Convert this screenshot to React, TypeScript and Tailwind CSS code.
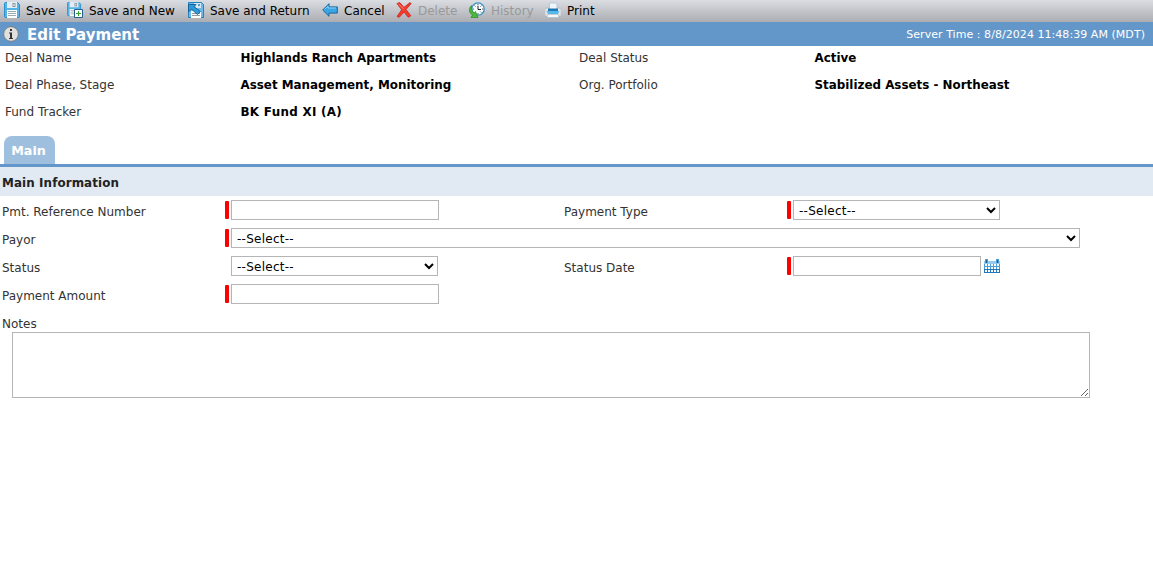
import type { ReactNode } from 'react';

interface ToolbarItem {
  label: string;
  icon: ReactNode;
  className: string;
  disabled?: boolean;
}

interface FieldProps {
  label: string;
  required?: boolean;
  className?: string;
  children: ReactNode;
}

const Disk = () => (
  <>
    <path d="M.5 1.500q0-1 1-1h12l2 2v12q0 1-1 1h-13q-1 0-1-1z" fill="#55b3e8" stroke="#2d8fca" />
    <path d="M3 0h10v6H3z" fill="#e3edf5" />
    <path d="M8.500 1h3v4h-3z" fill="#8b959e" />
    <path d="M9.500 2h1v2h-1z" fill="#fff" />
    <path d="M3 8h10v8H3z" fill="#fff" />
    <path d="M4 9.500h8M4 11.500h8M4 13.500h8" stroke="#a0a9b0" />
  </>
);

const SaveIcon = () => (
  <svg className="size-4" viewBox="0 0 16 16"><Disk /></svg>
);

const SaveNewIcon = () => (
  <svg className="size-4" viewBox="0 0 16 16">
    <g transform="scale(.88)"><Disk /></g>
    <path d="M7.500 7.500h8v8h-8z" fill="#fff" stroke="#1f5f92" />
    <path d="M11.500 9v5M9 11.500h5" stroke="#38a326" />
  </svg>
);

const SaveReturnIcon = () => (
  <svg className="size-4" viewBox="0 0 16 16">
    <path d="M.5.500h13l2 2v13H.5z" fill="#6abbe9" stroke="#2482bd" />
    <path d="M6 1h7v5H8z" fill="#d5e8f5" />
    <path d="M10 2h2v2h-2z" fill="#5c9ac4" />
    <path d="M3 9h10v7H3z" fill="#fff" />
    <path d="M4 11.500h8M4 13.500h8" stroke="#929ca4" />
    <path d="M.5 2.500h7.500L6 4.800l6.500 4.700-3 3L3.500 7.200.5 9.800z" fill="#2d9ad9" stroke="#175c8d" strokeWidth=".9" />
  </svg>
);

const CancelIcon = () => (
  <svg className="size-4" viewBox="0 0 16 16">
    <path d="M.7 8 7 1.700v3.200h8.300v6.200H7v3.200z" fill="#39a5e4" stroke="#176699" strokeLinejoin="round" />
    <path d="M2.500 7.500 6 4v2h8" fill="none" stroke="#87d0f6" />
  </svg>
);

const DeleteIcon = () => (
  <svg className="size-4" viewBox="0 0 16 16">
    <path d="M1 1.500 3.800.6 8 5.400 13.800.7l1.400.8L10 7.500l4.800 6.300-2.500 1.500L8 10l-4.800 5.300-2.100-.8L5.700 7.800z" fill="#f43b2c" stroke="#c91f17" strokeWidth=".8" strokeLinejoin="round" />
    <path d="m2.500 1.800 5 5" stroke="#ff8b7a" />
  </svg>
);

const HistoryIcon = () => (
  <svg className="size-4" viewBox="0 0 16 16">
    <circle cx="9" cy="7" r="6.200" fill="#f7fbfd" stroke="#378fc0" strokeWidth="1.300" />
    <path d="M9 2v1.500M9 11v1.500M4 7h1M13 7h1.300M5.500 3.500l1 1M12.500 3.500l-1 1M12.300 10.600l-1-1" stroke="#55626a" />
    <path d="M9 4v3.500h3" fill="none" stroke="#222" />
    <path d="M2.500 3.500C-1 7 .2 11 3.500 13L2 15.500h7l-2.500-6L5 11C3 9.500 2.500 7 2.500 3.500z" fill="#4cba37" stroke="#238b28" strokeWidth=".7" />
  </svg>
);

const PrintIcon = () => (
  <svg className="size-4" viewBox="0 0 16 16">
    <path d="M4.500 1h6L12 2.500V8H4.500z" fill="#eef6fc" stroke="#a9c5d8" strokeWidth=".8" />
    <path d="M0 7.500 1.500 6h2v3h9V6h2L16 7.500V14H0z" fill="#e1e6ea" stroke="#a4adb5" strokeWidth=".5" />
    <path d="M3 6.500h10V9H3z" fill="#1d79b4" />
    <path d="M1.500 9h13l-1.500 3H3z" fill="#57b8e9" />
    <path d="M2.500 12.500h11L14 15.500H2z" fill="#f5f9fb" stroke="#a4b3bd" strokeWidth=".6" />
  </svg>
);

const InfoIcon = () => (
  <svg className="size-4" viewBox="0 0 16 16">
    <circle cx="8" cy="8" r="7.300" fill="#e0e0df" stroke="#777" strokeWidth=".8" />
    <path d="M7 3h2v2H7zM6 6.500h3V12h1v1H6v-1h1V7.500H6z" fill="#333" />
  </svg>
);

const CalendarIcon = () => (
  <svg className="ml-[3px] h-4 w-4" viewBox="0 0 16 16">
    <path d="M0 3h16v12H0z" fill="#4a9ed6" />
    <path d="M0 11h16v4H0z" fill="#1f78bd" />
    <path d="M0 3h16v3H0z" fill="#94cbf0" />
    <path d="M1 1h3v4H1zM12 1h3v4h-3z" fill="#4a9dd3" />
    <path d="M2 2h1v3H2zM13 2h1v3h-1z" fill="#175f94" />
    <path d="M1 6h2v2H1zM4 6h2v2H4zM7 6h2v2H7zM10 6h2v2h-2zM13 6h2v2h-2zM1 9h2v2H1zM4 9h2v2H4zM7 9h2v2H7zM10 9h2v2h-2zM13 9h2v2h-2zM1 12h2v2H1zM4 12h2v2H4zM7 12h2v2H7zM10 12h2v2h-2zM13 12h2v2h-2z" fill="#fff" />
  </svg>
);

const toolbar: ToolbarItem[] = [
  { label: 'Save', icon: <SaveIcon />, className: 'w-[63px]' },
  { label: 'Save and New', icon: <SaveNewIcon />, className: 'w-[121px]' },
  { label: 'Save and Return', icon: <SaveReturnIcon />, className: 'w-[134px]' },
  { label: 'Cancel', icon: <CancelIcon />, className: 'w-[74px]' },
  { label: 'Delete', icon: <DeleteIcon />, className: 'w-[73px]', disabled: true },
  { label: 'History', icon: <HistoryIcon />, className: 'w-[76px]', disabled: true },
  { label: 'Print', icon: <PrintIcon />, className: 'w-[60px]' },
];

const dealInfo = [
  { cells: ['Deal Name', 'Highlands Ranch Apartments', 'Deal Status', 'Active'], className: '' },
  { cells: ['Deal Phase, Stage', 'Asset Management, Monitoring', 'Org. Portfolio', 'Stabilized Assets - Northeast'], className: '' },
  { cells: ['Fund Tracker', 'BK Fund XI (A)', '', ''], className: 'tracking-[0.3px]' },
];

const inputClass = 'h-5 rounded-none border border-[#b5b5b5] bg-white px-1 outline-none';
const selectClass = 'h-5 rounded-none border border-[#b5b5b5] bg-white pt-px pr-px tracking-[0.25px] text-black outline-none';
const boldClass = 'font-bold text-[11.9px]';

function Field({ label, required, className = 'w-[562px]', children }: FieldProps) {
  return (
    <div className={`flex h-7 shrink-0 items-center ${className}`}>
      <label className="w-[223px] shrink-0 pt-[3px] pl-0.5">{label}</label>
      <span className={`mr-0.5 ml-0.5 h-[18px] w-1 shrink-0 rounded-[1px] ${required ? 'bg-[#f00]' : ''}`} />
      {children}
    </div>
  );
}

function Select({ className }: { className: string }) {
  return (
    <select className={`${selectClass} ${className}`}>
      <option>--Select--</option>
    </select>
  );
}

export default function App() {
  return (
    <div className="h-[588px] overflow-hidden bg-white font-['DejaVu_Sans',sans-serif] text-[12px] leading-[18px] whitespace-nowrap text-[#333]">
      <div className="flex h-[22px] items-center bg-linear-to-b from-[#dadde2] to-[#abadb3] pl-1 text-black">
        {toolbar.map((item) => (
          <button
            key={item.label}
            disabled={item.disabled}
            className={`flex shrink-0 items-center gap-1.5 pb-px text-left disabled:text-[#999] ${item.className}`}
          >
            <span className="shrink-0 pb-px">{item.icon}</span>
            {item.label}
          </button>
        ))}
      </div>

      <header className="flex h-6 items-center bg-[#6397ca] pr-2 pl-[3px] text-white">
        <InfoIcon />
        <h1 className="ml-2 pt-px text-[15px] font-bold">Edit Payment</h1>
        <span className="ml-auto pt-0.5 text-[11px] tracking-[0.05px]">Server Time : 8/8/2024 11:48:39 AM (MDT)</span>
      </header>

      <div className="h-[90px]">
        {dealInfo.map(({ cells, className }) => (
          <div key={cells[0]} className="grid h-[27px] grid-cols-[235.500px_338.500px_235.500px_1fr] pt-[3px] pl-[5px]">
            <span>{cells[0]}</span>
            <span className={`${boldClass} text-black ${className}`}>{cells[1]}</span>
            <span>{cells[2]}</span>
            <span className={`${boldClass} text-black`}>{cells[3]}</span>
          </div>
        ))}
      </div>

      <div className="flex h-[31px] border-b-[3px] border-[#6397ca] pl-1">
        <div className="flex w-[51px] items-center justify-center rounded-t-lg bg-[#9fbfdf] pt-0.5 pr-0.5 text-[12.7px] font-bold text-white">Main</div>
      </div>
      <h2 className={`flex h-[29px] items-center bg-[#e1e9f2] pt-0.5 pl-0.5 ${boldClass} tracking-[0.1px] text-[#222]`}>Main Information</h2>

      <form>
        <div className="flex">
          <Field label="Pmt. Reference Number" required><input className={`${inputClass} w-52`} /></Field>
          <Field label="Payment Type" required><Select className="w-[207px] pl-px" /></Field>
        </div>
        <Field label="Payor" required className="w-full"><Select className="w-[849px] pl-px" /></Field>
        <div className="flex">
          <Field label="Status"><Select className="w-[207px] pl-px" /></Field>
          <Field label="Status Date" required>
            <input className={`${inputClass} w-[188px]`} />
            <CalendarIcon />
          </Field>
        </div>
        <Field label="Payment Amount" required><input className={`${inputClass} w-52`} /></Field>
        <div className="pt-[7px]">
          <label className="block h-[17px] pl-0.5">Notes</label>
          <textarea className="ml-3 block h-[66px] w-[1078px] resize rounded-none border border-[#b5b5b5] bg-white outline-none" />
        </div>
      </form>
    </div>
  );
}
